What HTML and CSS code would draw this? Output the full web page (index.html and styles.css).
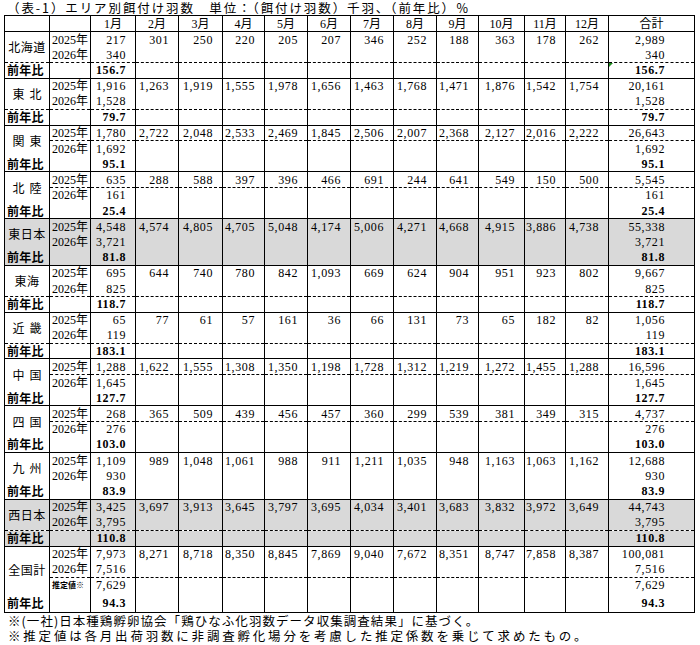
FILE: index.html
```html
<!DOCTYPE html>
<html lang="ja">
<head>
<meta charset="utf-8">
<title>エリア別餌付け羽数</title>
<link rel="stylesheet" href="styles.css">
</head>
<body>
<div class="page">
  <div class="title">（表-1）エリア別餌付け羽数　単位：（餌付け羽数）千羽、（前年比）％</div>
  <table class="t">
    <colgroup>
      <col class="w45"><col class="w41"><col class="w45"><col class="w43"><col class="w44"><col class="w42"><col class="w43"><col class="w43"><col class="w43"><col class="w43"><col class="w42"><col class="w46"><col class="w41"><col class="w43"><col class="w86">
    </colgroup>
    <tbody>
      <tr class="hd"><td></td><td></td><td class="h">1月</td><td class="h">2月</td><td class="h">3月</td><td class="h">4月</td><td class="h">5月</td><td class="h">6月</td><td class="h">7月</td><td class="h">8月</td><td class="h">9月</td><td class="h">10月</td><td class="h">11月</td><td class="h">12月</td><td class="h">合計</td></tr>
    </tbody>
    <tbody class="blk">
      <tr><td class="area" rowspan="2">北海道</td><td class="yr">2025年</td><td class="n">217</td><td class="n">301</td><td class="n">250</td><td class="n">220</td><td class="n">205</td><td class="n">207</td><td class="n">346</td><td class="n">252</td><td class="n">188</td><td class="n">363</td><td class="n">178</td><td class="n">262</td><td class="tot">2,989</td></tr>
      <tr><td class="yr">2026年</td><td class="n">340</td><td></td><td></td><td></td><td></td><td></td><td></td><td></td><td></td><td></td><td></td><td></td><td class="tot">340</td></tr>
      <tr class="last dtop"><td class="zen">前年比</td><td></td><td class="n b">156.7</td><td></td><td></td><td></td><td></td><td></td><td></td><td></td><td></td><td></td><td></td><td></td><td class="tot b err">156.7</td></tr>
    </tbody>
    <tbody class="blk">
      <tr><td class="area sp" rowspan="2">東北</td><td class="yr">2025年</td><td class="n">1,916</td><td class="n">1,263</td><td class="n">1,919</td><td class="n">1,555</td><td class="n">1,978</td><td class="n">1,656</td><td class="n">1,463</td><td class="n">1,768</td><td class="n">1,471</td><td class="n">1,876</td><td class="n">1,542</td><td class="n">1,754</td><td class="tot">20,161</td></tr>
      <tr><td class="yr">2026年</td><td class="n">1,528</td><td></td><td></td><td></td><td></td><td></td><td></td><td></td><td></td><td></td><td></td><td></td><td class="tot">1,528</td></tr>
      <tr class="last dtop"><td class="zen">前年比</td><td></td><td class="n b">79.7</td><td></td><td></td><td></td><td></td><td></td><td></td><td></td><td></td><td></td><td></td><td></td><td class="tot b">79.7</td></tr>
    </tbody>
    <tbody class="blk">
      <tr><td class="area sp" rowspan="2">関東</td><td class="yr">2025年</td><td class="n">1,780</td><td class="n">2,722</td><td class="n">2,048</td><td class="n">2,533</td><td class="n">2,469</td><td class="n">1,845</td><td class="n">2,506</td><td class="n">2,007</td><td class="n">2,368</td><td class="n">2,127</td><td class="n">2,016</td><td class="n">2,222</td><td class="tot">26,643</td></tr>
      <tr class="dtop"><td class="yr">2026年</td><td class="n">1,692</td><td></td><td></td><td></td><td></td><td></td><td></td><td></td><td></td><td></td><td></td><td></td><td class="tot">1,692</td></tr>
      <tr class="last"><td class="zen">前年比</td><td></td><td class="n b">95.1</td><td></td><td></td><td></td><td></td><td></td><td></td><td></td><td></td><td></td><td></td><td></td><td class="tot b">95.1</td></tr>
    </tbody>
    <tbody class="blk">
      <tr><td class="area sp" rowspan="2">北陸</td><td class="yr">2025年</td><td class="n">635</td><td class="n">288</td><td class="n">588</td><td class="n">397</td><td class="n">396</td><td class="n">466</td><td class="n">691</td><td class="n">244</td><td class="n">641</td><td class="n">549</td><td class="n">150</td><td class="n">500</td><td class="tot">5,545</td></tr>
      <tr class="dtop"><td class="yr">2026年</td><td class="n">161</td><td></td><td></td><td></td><td></td><td></td><td></td><td></td><td></td><td></td><td></td><td></td><td class="tot">161</td></tr>
      <tr class="last"><td class="zen">前年比</td><td></td><td class="n b">25.4</td><td></td><td></td><td></td><td></td><td></td><td></td><td></td><td></td><td></td><td></td><td></td><td class="tot b">25.4</td></tr>
    </tbody>
    <tbody class="blk gray">
      <tr><td class="area" rowspan="2">東日本</td><td class="yr">2025年</td><td class="n">4,548</td><td class="n">4,574</td><td class="n">4,805</td><td class="n">4,705</td><td class="n">5,048</td><td class="n">4,174</td><td class="n">5,006</td><td class="n">4,271</td><td class="n">4,668</td><td class="n">4,915</td><td class="n">3,886</td><td class="n">4,738</td><td class="tot">55,338</td></tr>
      <tr><td class="yr">2026年</td><td class="n">3,721</td><td></td><td></td><td></td><td></td><td></td><td></td><td></td><td></td><td></td><td></td><td></td><td class="tot">3,721</td></tr>
      <tr class="last"><td class="zen">前年比</td><td></td><td class="n b">81.8</td><td></td><td></td><td></td><td></td><td></td><td></td><td></td><td></td><td></td><td></td><td></td><td class="tot b">81.8</td></tr>
    </tbody>
    <tbody class="blk">
      <tr><td class="area" rowspan="2">東海</td><td class="yr">2025年</td><td class="n">695</td><td class="n">644</td><td class="n">740</td><td class="n">780</td><td class="n">842</td><td class="n">1,093</td><td class="n">669</td><td class="n">624</td><td class="n">904</td><td class="n">951</td><td class="n">923</td><td class="n">802</td><td class="tot">9,667</td></tr>
      <tr><td class="yr">2026年</td><td class="n">825</td><td></td><td></td><td></td><td></td><td></td><td></td><td></td><td></td><td></td><td></td><td></td><td class="tot">825</td></tr>
      <tr class="last dtop"><td class="zen">前年比</td><td></td><td class="n b">118.7</td><td></td><td></td><td></td><td></td><td></td><td></td><td></td><td></td><td></td><td></td><td></td><td class="tot b">118.7</td></tr>
    </tbody>
    <tbody class="blk">
      <tr><td class="area sp" rowspan="2">近畿</td><td class="yr">2025年</td><td class="n">65</td><td class="n">77</td><td class="n">61</td><td class="n">57</td><td class="n">161</td><td class="n">36</td><td class="n">66</td><td class="n">131</td><td class="n">73</td><td class="n">65</td><td class="n">182</td><td class="n">82</td><td class="tot">1,056</td></tr>
      <tr><td class="yr">2026年</td><td class="n">119</td><td></td><td></td><td></td><td></td><td></td><td></td><td></td><td></td><td></td><td></td><td></td><td class="tot">119</td></tr>
      <tr class="last dtop"><td class="zen">前年比</td><td></td><td class="n b">183.1</td><td></td><td></td><td></td><td></td><td></td><td></td><td></td><td></td><td></td><td></td><td></td><td class="tot b">183.1</td></tr>
    </tbody>
    <tbody class="blk">
      <tr><td class="area sp" rowspan="2">中国</td><td class="yr">2025年</td><td class="n">1,288</td><td class="n">1,622</td><td class="n">1,555</td><td class="n">1,308</td><td class="n">1,350</td><td class="n">1,198</td><td class="n">1,728</td><td class="n">1,312</td><td class="n">1,219</td><td class="n">1,272</td><td class="n">1,455</td><td class="n">1,288</td><td class="tot">16,596</td></tr>
      <tr class="dtop"><td class="yr">2026年</td><td class="n">1,645</td><td></td><td></td><td></td><td></td><td></td><td></td><td></td><td></td><td></td><td></td><td></td><td class="tot">1,645</td></tr>
      <tr class="last"><td class="zen">前年比</td><td></td><td class="n b">127.7</td><td></td><td></td><td></td><td></td><td></td><td></td><td></td><td></td><td></td><td></td><td></td><td class="tot b">127.7</td></tr>
    </tbody>
    <tbody class="blk">
      <tr><td class="area sp" rowspan="2">四国</td><td class="yr">2025年</td><td class="n">268</td><td class="n">365</td><td class="n">509</td><td class="n">439</td><td class="n">456</td><td class="n">457</td><td class="n">360</td><td class="n">299</td><td class="n">539</td><td class="n">381</td><td class="n">349</td><td class="n">315</td><td class="tot">4,737</td></tr>
      <tr class="dtop"><td class="yr">2026年</td><td class="n">276</td><td></td><td></td><td></td><td></td><td></td><td></td><td></td><td></td><td></td><td></td><td></td><td class="tot">276</td></tr>
      <tr class="last"><td class="zen">前年比</td><td></td><td class="n b">103.0</td><td></td><td></td><td></td><td></td><td></td><td></td><td></td><td></td><td></td><td></td><td></td><td class="tot b">103.0</td></tr>
    </tbody>
    <tbody class="blk">
      <tr><td class="area sp" rowspan="2">九州</td><td class="yr">2025年</td><td class="n">1,109</td><td class="n">989</td><td class="n">1,048</td><td class="n">1,061</td><td class="n">988</td><td class="n">911</td><td class="n">1,211</td><td class="n">1,035</td><td class="n">948</td><td class="n">1,163</td><td class="n">1,063</td><td class="n">1,162</td><td class="tot">12,688</td></tr>
      <tr><td class="yr">2026年</td><td class="n">930</td><td></td><td></td><td></td><td></td><td></td><td></td><td></td><td></td><td></td><td></td><td></td><td class="tot">930</td></tr>
      <tr class="last"><td class="zen">前年比</td><td></td><td class="n b">83.9</td><td></td><td></td><td></td><td></td><td></td><td></td><td></td><td></td><td></td><td></td><td></td><td class="tot b">83.9</td></tr>
    </tbody>
    <tbody class="blk gray">
      <tr><td class="area" rowspan="2">西日本</td><td class="yr">2025年</td><td class="n">3,425</td><td class="n">3,697</td><td class="n">3,913</td><td class="n">3,645</td><td class="n">3,797</td><td class="n">3,695</td><td class="n">4,034</td><td class="n">3,401</td><td class="n">3,683</td><td class="n">3,832</td><td class="n">3,972</td><td class="n">3,649</td><td class="tot">44,743</td></tr>
      <tr><td class="yr">2026年</td><td class="n">3,795</td><td></td><td></td><td></td><td></td><td></td><td></td><td></td><td></td><td></td><td></td><td></td><td class="tot">3,795</td></tr>
      <tr class="last dtop"><td class="zen">前年比</td><td></td><td class="n b">110.8</td><td></td><td></td><td></td><td></td><td></td><td></td><td></td><td></td><td></td><td></td><td></td><td class="tot b">110.8</td></tr>
    </tbody>
    <tbody class="blk">
      <tr><td class="area" rowspan="3">全国計</td><td class="yr">2025年</td><td class="n">7,973</td><td class="n">8,271</td><td class="n">8,718</td><td class="n">8,350</td><td class="n">8,845</td><td class="n">7,869</td><td class="n">9,040</td><td class="n">7,672</td><td class="n">8,351</td><td class="n">8,747</td><td class="n">7,858</td><td class="n">8,387</td><td class="tot">100,081</td></tr>
      <tr><td class="yr">2026年</td><td class="n">7,516</td><td></td><td></td><td></td><td></td><td></td><td></td><td></td><td></td><td></td><td></td><td></td><td class="tot">7,516</td></tr>
      <tr class="dtop"><td class="yr est">推定値※</td><td class="n">7,629</td><td></td><td></td><td></td><td></td><td></td><td></td><td></td><td></td><td></td><td></td><td></td><td class="tot">7,629</td></tr>
      <tr class="last tall"><td class="zen">前年比</td><td></td><td class="n b">94.3</td><td></td><td></td><td></td><td></td><td></td><td></td><td></td><td></td><td></td><td></td><td></td><td class="tot b">94.3</td></tr>
    </tbody>
  </table>
  <div class="notes">
    <p class="note n1">※(一社)日本種鶏孵卵協会「鶏ひなふ化羽数データ収集調査結果」に基づく。</p>
    <p class="note n2">※推定値は各月出荷羽数に非調査孵化場分を考慮した推定係数を乗じて求めたもの。</p>
  </div>
</div>
</body>
</html>
```

FILE: styles.css
```css
html, body {
  margin: 0;
  padding: 0;
  background: #ffffff;
}
body {
  font-family: "Noto Sans CJK JP", sans-serif;
  color: #000000;
}
.page {
  padding-left: 4px;
}
.title {
  height: 15px;
  line-height: 15px;
  font-size: 12.5px;
  padding-left: 3px;
  white-space: nowrap;
  letter-spacing: 1.9px;
}
.t {
  border-collapse: collapse;
  table-layout: fixed;
  width: 690px;
  border: 1px solid #000;
}
.w41 { width: 41px; }
.w42 { width: 42px; }
.w43 { width: 43px; }
.w44 { width: 44px; }
.w45 { width: 45px; }
.w46 { width: 46px; }
.w86 { width: 86px; }
.t tr { height: 15.6px; }
.t tr.hd { height: 16px; }
.t tr.tall { height: 20px; }
.t td {
  border-left: 1px solid #000;
  border-right: 1px solid #000;
  padding: 0;
  line-height: 14px;
  font-size: 12px;
  white-space: nowrap;
  overflow: hidden;
  vertical-align: middle;
}
.t tr.hd td { border-bottom: 1px solid #000; }
.t tr.last td { border-bottom: 1px solid #000; }
.t tr.dtop td { border-top: 1px dashed #000; }
.gray td { background: #d9d9d9; }
.h {
  text-align: center;
  font-family: "Liberation Serif", "Noto Sans CJK JP", serif;
  font-size: 12.5px;
}
.area {
  text-align: center;
  font-size: 13px;
  letter-spacing: 0.5px;
}
.area.sp {
  letter-spacing: 5px;
  padding-left: 5px;
}
.zen {
  font-weight: 700;
  font-size: 12.5px;
  padding-left: 2px !important;
  letter-spacing: 0.2px;
}
.yr {
  font-family: "Liberation Serif", "Noto Sans CJK JP", serif;
  font-size: 12.5px;
  padding-left: 2px !important;
}
.yr.est {
  font-family: "Noto Sans CJK JP", sans-serif;
  font-size: 8px;
  font-weight: 700;
}
.n, .tot {
  font-family: "Liberation Serif", "Noto Sans CJK JP", serif;
  font-size: 12.5px;
  letter-spacing: 0.6px;
  text-align: right;
}
.n { padding-right: 9px !important; }
.tot { padding-right: 29px !important; }
.b { font-weight: 700; }
.err { position: relative; }
.err::before {
  content: "";
  position: absolute;
  left: 0;
  top: 0;
  border-top: 4px solid #1e8c1e;
  border-right: 4px solid transparent;
}
.notes { padding-left: 4px; }
.note {
  margin: 0;
  height: 15px;
  line-height: 15px;
  font-size: 12.5px;
  white-space: nowrap;
}
.n1 { letter-spacing: 1.05px; }
.n2 { letter-spacing: 2.8px; }
```
